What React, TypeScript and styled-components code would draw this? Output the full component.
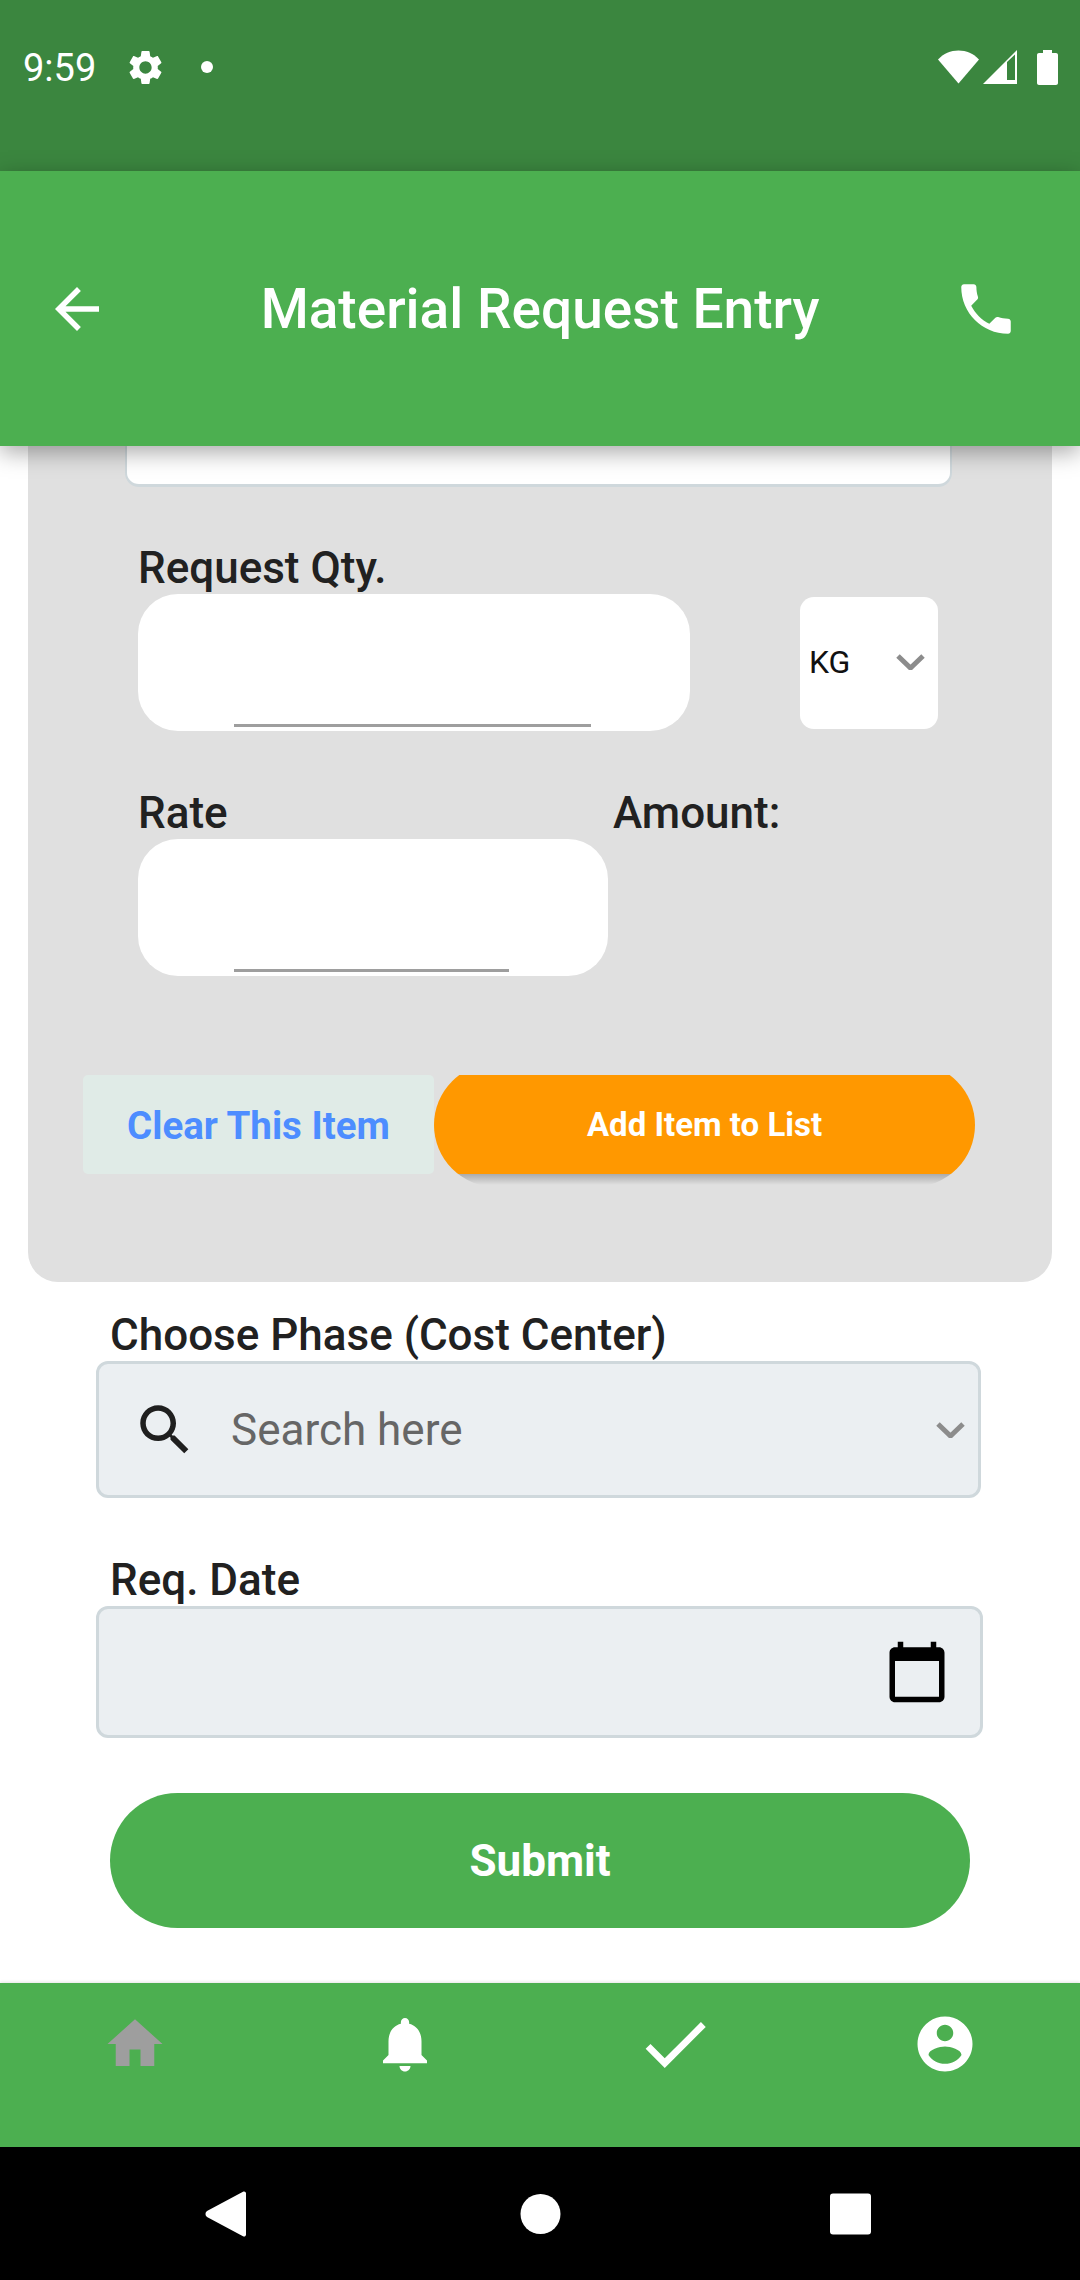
import styled, { createGlobalStyle } from 'styled-components'

const GlobalStyle = createGlobalStyle`
  html, body {
    margin: 0;
    padding: 0;
    background: #fff;
  }
  * {
    box-sizing: border-box;
  }
`

const green = '#4caf50'

const Page = styled.div`
  width: 1080px;
  height: 2280px;
  display: flex;
  flex-direction: column;
  overflow: hidden;
  font-family: Roboto, 'Liberation Sans', sans-serif;
  color: #212121;
  background: #fff;
`

const StatusBar = styled.div`
  height: 171px;
  flex: none;
  background: #3b863f;
  color: #fff;
  padding: 0 22px 37px 23px;
  display: flex;
  align-items: center;
  justify-content: space-between;
`

const StatusGroup = styled.div`
  display: flex;
  align-items: center;
`

const Clock = styled.span`
  font-size: 38px;
  line-height: 44px;
  margin-top: 2px;
`

const GearIcon = styled.svg`
  width: 41px;
  height: 41px;
  margin-left: 29px;
  fill: #fff;
`

const Dot = styled.span`
  width: 12px;
  height: 12px;
  border-radius: 50%;
  background: #fff;
  margin-left: 35px;
`

const StatusGlyph = styled.svg<{ $ml: number }>`
  display: block;
  margin-left: ${(p) => p.$ml}px;
  fill: #fff;
`

const Header = styled.header`
  position: relative;
  z-index: 2;
  height: 275px;
  flex: none;
  background: ${green};
  box-shadow: 0 6px 22px rgba(0, 0, 0, 0.35);
  padding: 0 61px 0 44px;
  display: flex;
  align-items: center;
  justify-content: space-between;
  color: #fff;
`

const Title = styled.h1`
  margin: 0 0 0 17px;
  font-size: 55px;
  line-height: 60px;
  font-weight: 500;
`

const Icon = styled.svg<{ $size: number; $color?: string }>`
  display: block;
  flex: none;
  width: ${(p) => p.$size}px;
  height: ${(p) => p.$size}px;
  fill: ${(p) => p.$color ?? 'currentColor'};
`

const Content = styled.main`
  flex: 1;
  min-height: 0;
  overflow: hidden;
`

const Panel = styled.section`
  margin: 0 28px;
  height: 836px;
  background: #e0e0e0;
  border-radius: 0 0 30px 30px;
`

const CutField = styled.div`
  height: 41px;
  margin: 0 100px 0 97px;
  background: #fff;
  border-style: solid;
  border-color: #cfd8dc;
  border-width: 0 2px 3px;
  border-radius: 0 0 14px 14px;
`

const Label = styled.label`
  display: block;
  height: 48px;
  font-size: 44px;
  line-height: 44px;
  font-weight: 500;
`

const QtyBlock = styled.div`
  margin: 59px 0 0 110px;
`

const QtyRow = styled.div`
  display: flex;
  align-items: center;
`

const NumberBox = styled.div<{ $width: number }>`
  width: ${(p) => p.$width}px;
  height: 137px;
  background: #fff;
  border-radius: 40px;
  padding: 0 0 4px 96px;
  display: flex;
  align-items: flex-end;
`

const Underline = styled.div<{ $width: number }>`
  width: ${(p) => p.$width}px;
  height: 3px;
  background: #9e9e9e;
`

const UnitSelect = styled.div`
  width: 138px;
  height: 132px;
  margin-left: 110px;
  background: #fff;
  border-radius: 14px;
  padding: 0 0 2px 9px;
  display: flex;
  align-items: center;
  justify-content: space-between;
  font-size: 32px;
  color: #111;
`

const RateRow = styled.div`
  margin: 60px 0 0 110px;
  display: flex;
  align-items: flex-start;
`

const Amount = styled(Label)`
  margin-left: 5px;
`

const Actions = styled.div`
  margin: 99px 0 0 55px;
  display: flex;
  height: 99px;
`

const ClearButton = styled.div`
  width: 351px;
  height: 99px;
  padding-top: 2px;
  background: #e0ebe7;
  border-radius: 5px;
  color: #4d8dff;
  font-size: 38.5px;
  font-weight: 700;
  display: flex;
  align-items: center;
  justify-content: center;
`

const AddClip = styled.div`
  width: 541px;
  height: 110px;
  overflow: hidden;
`

const AddButton = styled.div`
  width: 541px;
  height: 124px;
  margin-top: -12px;
  border-radius: 62px;
  background: linear-gradient(
    #ff9800 0,
    #ff9800 111px,
    rgba(0, 0, 0, 0.24) 111px,
    rgba(0, 0, 0, 0) 122px
  );
  padding-bottom: 2px;
  color: #fff;
  font-size: 33px;
  font-weight: 700;
  display: flex;
  align-items: center;
  justify-content: center;
`

const FormBlock = styled.div<{ $mt: number }>`
  margin: ${(p) => p.$mt}px 0 0 96px;

  ${Label} {
    padding-left: 14px;
  }
`

const Field = styled.div<{ $width: number; $height: number }>`
  width: ${(p) => p.$width}px;
  height: ${(p) => p.$height}px;
  background: #ebeff2;
  border: 3px solid #cfd8dc;
  border-radius: 12px;
  display: flex;
  align-items: center;
`

const SearchSlot = styled.div`
  margin-left: 33px;
  color: #1f1f1f;
`

const Placeholder = styled.span`
  flex: 1;
  margin-left: 33px;
  font-size: 44px;
  color: #666;
`

const FieldChevron = styled.svg`
  width: 29px;
  height: 16px;
  margin-right: 13px;
  fill: none;
  stroke: #8c8c8c;
  stroke-width: 5;
`

const DateSlot = styled.div`
  margin-left: auto;
  margin-right: 30px;
  color: #000;
`

const SubmitButton = styled.div`
  width: 860px;
  height: 135px;
  margin: 55px 0 0 110px;
  border-radius: 68px;
  background: ${green};
  color: #fff;
  font-size: 44px;
  font-weight: 700;
  display: flex;
  align-items: center;
  justify-content: center;
`

const BottomBar = styled.nav`
  height: 164px;
  flex: none;
  background: ${green};
  color: #fff;
  padding-top: 28px;
  display: grid;
  grid-template-columns: repeat(4, 270px);
  align-items: start;
  box-shadow: 0 -1px 3px rgba(0, 0, 0, 0.1);
  position: relative;
`

const Tab = styled.div`
  height: 66px;
  display: flex;
  align-items: center;
  justify-content: center;
`

const NavBar = styled.div`
  height: 133px;
  flex: none;
  background: #000;
  padding-left: 205px;
  display: flex;
  align-items: center;
`

const NavGlyph = styled.svg<{ $ml?: number }>`
  display: block;
  width: 41px;
  height: 46px;
  margin-left: ${(p) => p.$ml ?? 0}px;
  fill: #fff;
`

const paths = {
  gear: 'M19.14 12.94c.04-.3.06-.61.06-.94 0-.32-.02-.64-.07-.94l2.03-1.58c.18-.14.23-.41.12-.61l-1.92-3.32c-.12-.22-.37-.29-.59-.22l-2.39.96c-.5-.38-1.03-.7-1.62-.94l-.36-2.54c-.04-.24-.24-.41-.48-.41h-3.84c-.24 0-.43.17-.47.41l-.36 2.54c-.59.24-1.13.57-1.62.94l-2.39-.96c-.22-.08-.47 0-.59.22L2.74 8.87c-.12.21-.08.47.12.61l2.03 1.58c-.05.3-.09.63-.09.94s.02.64.07.94l-2.03 1.58c-.18.14-.23.41-.12.61l1.92 3.32c.12.22.37.29.59.22l2.39-.96c.5.38 1.03.7 1.62.94l.36 2.54c.05.24.24.41.48.41h3.84c.24 0 .44-.17.47-.41l.36-2.54c.59-.24 1.13-.56 1.62-.94l2.39.96c.22.08.47 0 .59-.22l1.92-3.32c.12-.22.07-.47-.12-.61l-2.01-1.58zM12 15.6c-1.98 0-3.6-1.62-3.6-3.6s1.62-3.6 3.6-3.6 3.6 1.62 3.6 3.6-1.62 3.6-3.6 3.6z',
  back: 'M20 11H7.83l5.59-5.59L12 4l-8 8 8 8 1.41-1.41L7.83 13H20v-2z',
  phone:
    'M6.62 10.79c1.44 2.83 3.76 5.14 6.59 6.59l2.2-2.2c.27-.27.67-.36 1.02-.24 1.12.37 2.33.57 3.57.57.55 0 1 .45 1 1V20c0 .55-.45 1-1 1-9.39 0-17-7.61-17-17 0-.55.45-1 1-1h3.5c.55 0 1 .45 1 1 0 1.25.2 2.45.57 3.57.11.35.03.74-.25 1.02l-2.2 2.2z',
  search:
    'M15.5 14h-.79l-.28-.27C15.41 12.59 16 11.11 16 9.5 16 5.91 13.09 3 9.5 3S3 5.91 3 9.5 5.91 16 9.5 16c1.61 0 3.09-.59 4.23-1.57l.27.28v.79l5 4.99L20.49 19l-4.99-5zm-6 0C7.01 14 5 11.99 5 9.5S7.01 5 9.5 5 14 7.01 14 9.5 11.99 14 9.5 14z',
  calendar:
    'M20 3h-1V1h-2v2H7V1H5v2H4c-1.1 0-2 .9-2 2v16c0 1.1.9 2 2 2h16c1.1 0 2-.9 2-2V5c0-1.1-.9-2-2-2zm0 18H4V8h16v13z',
  home: 'M10 20v-6h4v6h5v-8h3L12 3 2 12h3v8z',
  bell: 'M12 22c1.1 0 2-.9 2-2h-4c0 1.1.89 2 2 2zm6-6v-5c0-3.07-1.64-5.64-4.5-6.32V4c0-.83-.67-1.5-1.5-1.5s-1.5.67-1.5 1.5v.68C7.63 5.36 6 7.92 6 11v5l-2 2v1h16v-1l-2-2z',
  check: 'M9 16.17L4.83 12l-1.42 1.41L9 19 21 7l-1.41-1.41z',
  account:
    'M12 2C6.48 2 2 6.48 2 12s4.48 10 10 10 10-4.48 10-10S17.52 2 12 2zm0 3c1.66 0 3 1.34 3 3s-1.34 3-3 3-3-1.34-3-3 1.34-3 3-3zm0 14.2c-2.5 0-4.71-1.28-6-3.22.03-1.99 4-3.08 6-3.08 1.99 0 5.97 1.09 6 3.08-1.29 1.94-3.5 3.22-6 3.22z',
}

function Glyph({ d, size, color }: { d: string; size: number; color?: string }) {
  return (
    <Icon viewBox="0 0 24 24" $size={size} $color={color}>
      <path d={d} />
    </Icon>
  )
}

export default function App() {
  return (
    <Page>
      <GlobalStyle />
      <StatusBar>
        <StatusGroup>
          <Clock>9:59</Clock>
          <GearIcon viewBox="0 0 24 24">
            <path d={paths.gear} />
          </GearIcon>
          <Dot />
        </StatusGroup>
        <StatusGroup>
          <StatusGlyph $ml={0} width="41" height="34" viewBox="0 0 41 34">
            <path d="M20.5 33.5 0 9.5C5.5 3.6 12.6.5 20.5.5S35.5 3.6 41 9.5z" />
          </StatusGlyph>
          <StatusGlyph $ml={4} width="34" height="34" viewBox="0 0 34 34">
            <path fillRule="evenodd" d="M0 34 34 0v34zM24 12v20h8V4.500z" />
            <path d="M24 30h8v2h-8z" />
          </StatusGlyph>
          <StatusGlyph $ml={20} width="21" height="35" viewBox="0 0 21 35">
            <path d="M6 0h9v3h4c1.100 0 2 .9 2 2v28c0 1.100-.9 2-2 2H2c-1.100 0-2-.9-2-2V5c0-1.100.9-2 2-2h4z" />
          </StatusGlyph>
        </StatusGroup>
      </StatusBar>

      <Header>
        <Glyph d={paths.back} size={66} />
        <Title>Material Request Entry</Title>
        <Glyph d={paths.phone} size={66} />
      </Header>

      <Content>
        <Panel>
          <CutField />
          <QtyBlock>
            <Label>Request Qty.</Label>
            <QtyRow>
              <NumberBox $width={552}>
                <Underline $width={357} />
              </NumberBox>
              <UnitSelect>
                <span>KG</span>
                <FieldChevron viewBox="0 0 29 16">
                  <path d="M2 2l12.500 12L27 2" />
                </FieldChevron>
              </UnitSelect>
            </QtyRow>
          </QtyBlock>
          <RateRow>
            <div>
              <Label>Rate</Label>
              <NumberBox $width={470}>
                <Underline $width={275} />
              </NumberBox>
            </div>
            <Amount>Amount:</Amount>
          </RateRow>
          <Actions>
            <ClearButton>Clear This Item</ClearButton>
            <AddClip>
              <AddButton>Add Item to List</AddButton>
            </AddClip>
          </Actions>
        </Panel>

        <FormBlock $mt={31}>
          <Label>Choose Phase (Cost Center)</Label>
          <Field $width={885} $height={137}>
            <SearchSlot>
              <Glyph d={paths.search} size={66} />
            </SearchSlot>
            <Placeholder>Search here</Placeholder>
            <FieldChevron viewBox="0 0 29 16">
              <path d="M2 2l12.500 12L27 2" />
            </FieldChevron>
          </Field>
        </FormBlock>

        <FormBlock $mt={60}>
          <Label>Req. Date</Label>
          <Field $width={887} $height={132}>
            <DateSlot>
              <Glyph d={paths.calendar} size={66} />
            </DateSlot>
          </Field>
        </FormBlock>

        <SubmitButton>Submit</SubmitButton>
      </Content>

      <BottomBar>
        <Tab>
          <Glyph d={paths.home} size={66} color="#9e9e9e" />
        </Tab>
        <Tab>
          <Glyph d={paths.bell} size={66} />
        </Tab>
        <Tab>
          <Glyph d={paths.check} size={82} />
        </Tab>
        <Tab>
          <Glyph d={paths.account} size={66} />
        </Tab>
      </BottomBar>

      <NavBar>
        <NavGlyph viewBox="0 0 41 46">
          <path d="M38 .8c1.500-1 3 .2 3 1.700v41c0 1.500-1.500 2.700-3 1.700L2 26c-2-1.500-2-4.500 0-6z" />
        </NavGlyph>
        <NavGlyph $ml={274} viewBox="0 0 41 46">
          <circle cx="20.500" cy="23" r="20" />
        </NavGlyph>
        <NavGlyph $ml={269} viewBox="0 0 41 46">
          <rect x="0" y="2.500" width="41" height="41" rx="3" />
        </NavGlyph>
      </NavBar>
    </Page>
  )
}
